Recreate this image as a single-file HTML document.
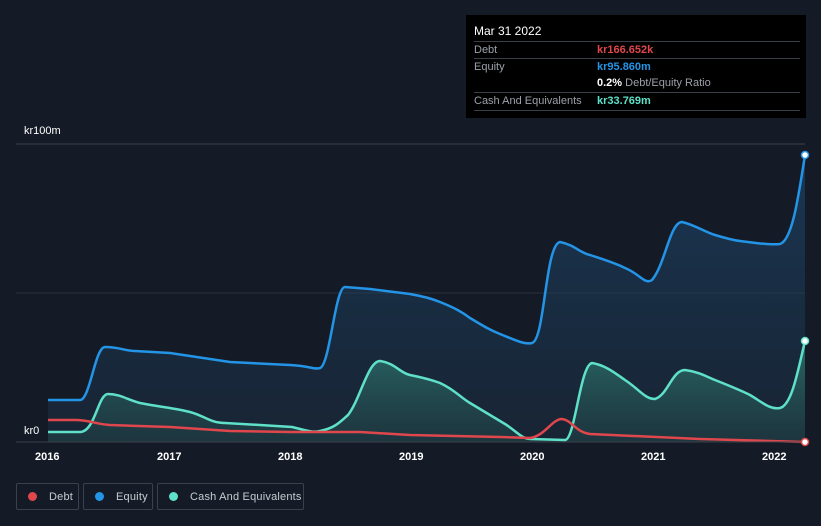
<!DOCTYPE html>
<html><head><style>
body{margin:0;width:821px;height:526px;background:#151b26;font-family:"Liberation Sans",sans-serif;overflow:hidden;position:relative}
.tip{position:absolute;left:466px;top:15px;width:340px;height:103px;background:#000;color:#fff;font-size:11px}
.row{position:absolute;left:8px;width:326px;border-top:1px solid #3a3f47;height:16px;line-height:16px}
.lbl{color:#9ba0a8}
.val{position:absolute;left:123px;font-weight:bold}
.leg{position:absolute;top:483px;height:27px;border:1px solid #3b414b;border-radius:2px;color:#c8ccd2;font-size:11px;line-height:26px;box-sizing:border-box;white-space:nowrap;letter-spacing:0.2px}
.dot{display:inline-block;width:9px;height:9px;border-radius:50%;margin:0 12px 0 11px;vertical-align:-1px}
.ax{position:absolute;top:451px;color:#fff;font-size:11px;font-weight:bold}
</style></head><body>
<svg width="821" height="526" style="position:absolute;left:0;top:0">
<defs>
<linearGradient id="ge" x1="0" y1="0" x2="0" y2="1"><stop offset="0" stop-color="#1d4a73" stop-opacity=".6"/><stop offset="1" stop-color="#1d3a55" stop-opacity=".3"/></linearGradient>
<linearGradient id="gc" x1="0" y1="0" x2="0" y2="1"><stop offset="0" stop-color="#3aa890" stop-opacity=".5"/><stop offset="1" stop-color="#2a5a55" stop-opacity=".3"/></linearGradient>
</defs>
<line x1="16" y1="144" x2="805" y2="144" stroke="#3a404a"/>
<line x1="16" y1="293" x2="805" y2="293" stroke="#2c323c"/>
<path d="M48,400 L80,400 C90,400 95,347 105,347 C120,347 125,351 135,351 L170,353 L230,362 L290,365 C310,366 315,370 320,368 C330,365 335,287 345,287 L370,289 L410,294 C425,297 430,298 440,302 C455,308 462,312 470,318 C485,327 490,330 500,334 C515,340 525,345 532,343 C545,340 545,245 560,242 C575,245 580,253 590,255 C605,260 615,263 625,268 C640,274 645,285 652,280 C665,265 670,222 682,222 C695,225 705,232 715,235 C725,238 732,240 740,241 C755,243 770,245 780,244 C792,240 798,200 805,155 L805,442 L48,442Z" fill="url(#ge)"/>
<path d="M48,432 L80,432 C95,432 98,394 108,394 C120,394 128,400 140,403 C160,407 175,408 190,412 C205,416 210,423 225,423 L260,425 L292,427 C305,430 312,433 320,431 C335,428 340,422 348,415 C360,400 368,361 380,361 C395,363 400,373 410,375 C425,378 432,380 440,383 C455,390 460,397 470,403 C485,412 495,418 505,424 C515,430 522,439 530,439 L565,440 C575,440 580,365 592,363 C605,365 615,373 625,380 C640,390 645,399 655,399 C668,395 672,370 685,370 C700,372 707,377 715,380 C730,386 740,390 750,395 C762,402 770,410 780,408 C792,405 798,370 805,341 L805,442 L48,442Z" fill="url(#gc)"/>
<path d="M48,400 L80,400 C90,400 95,347 105,347 C120,347 125,351 135,351 L170,353 L230,362 L290,365 C310,366 315,370 320,368 C330,365 335,287 345,287 L370,289 L410,294 C425,297 430,298 440,302 C455,308 462,312 470,318 C485,327 490,330 500,334 C515,340 525,345 532,343 C545,340 545,245 560,242 C575,245 580,253 590,255 C605,260 615,263 625,268 C640,274 645,285 652,280 C665,265 670,222 682,222 C695,225 705,232 715,235 C725,238 732,240 740,241 C755,243 770,245 780,244 C792,240 798,200 805,155" fill="none" stroke="#2394e6" stroke-width="2.5"/>
<path d="M48,432 L80,432 C95,432 98,394 108,394 C120,394 128,400 140,403 C160,407 175,408 190,412 C205,416 210,423 225,423 L260,425 L292,427 C305,430 312,433 320,431 C335,428 340,422 348,415 C360,400 368,361 380,361 C395,363 400,373 410,375 C425,378 432,380 440,383 C455,390 460,397 470,403 C485,412 495,418 505,424 C515,430 522,439 530,439 L565,440 C575,440 580,365 592,363 C605,365 615,373 625,380 C640,390 645,399 655,399 C668,395 672,370 685,370 C700,372 707,377 715,380 C730,386 740,390 750,395 C762,402 770,410 780,408 C792,405 798,370 805,341" fill="none" stroke="#5fe0c8" stroke-width="2.5"/>
<path d="M48,420 L75,420 C90,420 95,424 110,425 L170,427 L230,431 L290,432 L360,432 L410,435 L500,437 L530,438 C545,436 552,419 562,419 C572,420 575,432 590,434 L700,439 L805,442" fill="none" stroke="#e0474c" stroke-width="2.5"/>
<line x1="16" y1="442" x2="805" y2="442" stroke="#3a404a"/>
<circle cx="805" cy="155" r="3.5" fill="#fff" stroke="#2394e6" stroke-width="1.5"/>
<circle cx="805" cy="341" r="3.5" fill="#fff" stroke="#5fe0c8" stroke-width="1.5"/>
<circle cx="805" cy="442" r="3.5" fill="#fff" stroke="#e0474c" stroke-width="1.5"/>
</svg>
<div style="position:absolute;left:24px;top:125px;color:#fff;font-size:11px">kr100m</div>
<div style="position:absolute;left:24px;top:425px;color:#fff;font-size:11px">kr0</div>
<div class="ax" style="left:35px">2016</div><div class="ax" style="left:157px">2017</div><div class="ax" style="left:278px">2018</div><div class="ax" style="left:399px">2019</div><div class="ax" style="left:520px">2020</div><div class="ax" style="left:641px">2021</div><div class="ax" style="left:762px">2022</div>
<div class="tip">
<div style="position:absolute;left:8px;top:9px;font-size:12px">Mar 31 2022</div>
<div class="row" style="top:26px"><span class="lbl">Debt</span><span class="val" style="color:#e0474c">kr166.652k</span></div>
<div class="row" style="top:43px"><span class="lbl">Equity</span><span class="val" style="color:#2394e6">kr95.860m</span></div>
<div class="row" style="top:60px;border-top:none"><span class="val" style="color:#fff">0.2% <span style="color:#9ba0a8;font-weight:normal">Debt/Equity Ratio</span></span></div>
<div class="row" style="top:77px"><span class="lbl">Cash And Equivalents</span><span class="val" style="color:#5fe0c8">kr33.769m</span></div>
<div class="row" style="top:95px;height:0"></div>
</div>
<div class="leg" style="left:16px;width:63px"><span class="dot" style="background:#e0474c"></span>Debt</div>
<div class="leg" style="left:83px;width:70px"><span class="dot" style="background:#2394e6"></span>Equity</div>
<div class="leg" style="left:157px;width:147px"><span class="dot" style="background:#5fe0c8"></span>Cash And Equivalents</div>
</body></html>
